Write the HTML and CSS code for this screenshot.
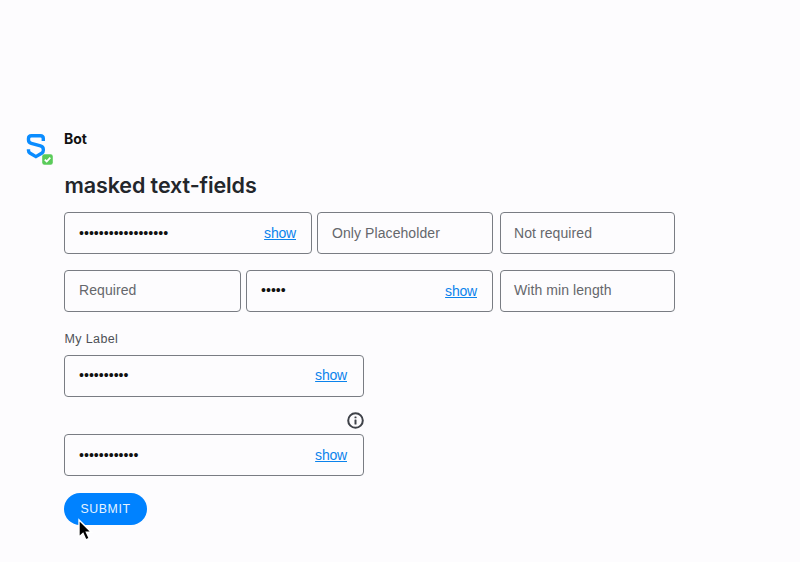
FILE: index.html
```html
<!DOCTYPE html>
<html lang="en">
<head>
<meta charset="utf-8">
<title>masked text-fields</title>
<link rel="stylesheet" href="styles.css">
</head>
<body>
<main class="message">
  <div class="avatar">
    <svg class="logo" width="20" height="27" viewBox="0 0 20 27" fill="none" stroke="#0a8cff" stroke-width="3.4">
      <path d="M17.3 9V6.6Q17.3 3.7 14.3 3.7H5.5Q2.5 3.7 2.5 6.6V8Q2.5 10.6 5.3 11.4L14.5 13.9Q17.3 14.7 17.3 17.3V18.6Q17.3 20.2 16 21L9.9 24.6L3.8 21Q2.5 20.2 2.5 18.6V17.2"/>
    </svg>
    <svg class="status" width="11" height="11" viewBox="0 0 11 11">
      <rect x=".2" y=".2" width="10.6" height="10.6" rx="2.2" fill="#5acb5a"/>
      <path d="M2.8 5.7L4.7 7.5L8.3 3.7" fill="none" stroke="#fff" stroke-width="1.8"/>
    </svg>
  </div>
  <div class="content">
    <div class="sender">Bot</div>
    <h1 class="title">masked text-fields</h1>
    <form class="form">
      <div class="row row-first">
        <div class="field"><span class="mask">••••••••••••••••••</span><a class="show">show</a></div>
        <div class="field"><span class="hint">Only Placeholder</span></div>
        <div class="field"><span class="hint">Not required</span></div>
      </div>
      <div class="row row-second">
        <div class="field"><span class="hint">Required</span></div>
        <div class="field"><span class="mask">•••••</span><a class="show">show</a></div>
        <div class="field"><span class="hint">With min length</span></div>
      </div>
      <div class="label">My Label</div>
      <div class="field field-single field-raised"><span class="mask">••••••••••</span><a class="show">show</a></div>
      <div class="info">
        <svg width="17" height="17" viewBox="0 0 17 17">
          <circle cx="8.5" cy="8.5" r="7.3" fill="none" stroke="#3f4249" stroke-width="2"/>
          <rect x="7.5" y="4.4" width="2" height="1.9" rx=".5" fill="#3f4249"/>
          <rect x="7.5" y="7.6" width="2" height="5" rx=".5" fill="#3f4249"/>
        </svg>
      </div>
      <div class="field field-single"><span class="mask">••••••••••••</span><a class="show">show</a></div>
      <button class="submit" type="button">SUBMIT</button>
    </form>
  </div>
</main>
<svg class="cursor" width="16" height="24" viewBox="0 0 16 24">
  <path d="M2 2V19L6 15.4L8.8 21.8L12.2 20.3L9.4 14.2H14.4Z" fill="#000" stroke="#fff" stroke-width="1.4"/>
</svg>
</body>
</html>
```
FILE: styles.css
```css
* { box-sizing: border-box; }
body {
  margin: 0;
  height: 562px;
  overflow: hidden;
  background: #fdfcfe;
  font-family: "Liberation Sans", Arial, sans-serif;
}
.message { display: flex; padding: 130px 0 0 26px; }
.avatar { position: relative; width: 38px; padding-top: 2px; flex: none; }
.logo { display: block; }
.status { position: absolute; left: 15.5px; top: 23.5px; }
.content { width: 611px; }
.sender {
  height: 18px;
  font: 700 14px/18px Inter, sans-serif;
  color: #111;
}
.title {
  margin: 22px 0 0;
  height: 30px;
  padding-left: .5px;
  font: 600 21.5px/30px Inter, sans-serif;
  letter-spacing: -.1px;
  color: #23262b;
  white-space: nowrap;
}
.form { padding-top: 12px; }
.row { display: grid; }
.row-first { grid-template-columns: 248px 176px 175px; column-gap: 6px; }
.row-second { grid-template-columns: 177px 247px 175px; column-gap: 6px; margin-top: 16px; }
.row > :nth-child(2) { margin-left: -1px; }
.row > :nth-child(2), .row > :last-child { margin-right: 0; }
.row-first > :nth-child(2), .row-second > :nth-child(2) { margin-right: 1px; }
.field {
  display: flex;
  align-items: center;
  justify-content: space-between;
  height: 42px;
  padding: 0 15px 0 14px;
  border: 1px solid #797c83;
  border-radius: 4px;
  white-space: nowrap;
}
.row > :last-child { padding-left: 13px; }
.row-second .field, .field-raised { padding-bottom: 2px; }
.field-single { width: 300px; padding-right: 16px; }
.hint { font-size: 14px; letter-spacing: .08px; color: #65676c; }
.mask { font-size: 14.15px; color: #111; }
.show {
  font-size: 14px;
  letter-spacing: -.2px;
  color: #0b83ec;
  text-decoration: underline;
  text-underline-offset: 1px;
}
.row-second .show { padding-top: 1px; }
.label {
  height: 43px;
  padding: 19px 0 0 .6px;
  font-size: 12.5px;
  line-height: 16px;
  letter-spacing: .35px;
  color: #4d5056;
}
.info { display: flex; justify-content: flex-end; width: 300px; height: 37px; padding-top: 15px; }
.submit {
  display: block;
  width: 83px;
  height: 32px;
  margin-top: 17px;
  padding: 0;
  border: 0;
  border-radius: 16px;
  background: #0082ff;
  color: #e6f3ff;
  font: 12.3px/32px "Liberation Sans", Arial, sans-serif;
  letter-spacing: .6px;
}
.cursor { position: absolute; left: 77px; top: 518px; }
```
